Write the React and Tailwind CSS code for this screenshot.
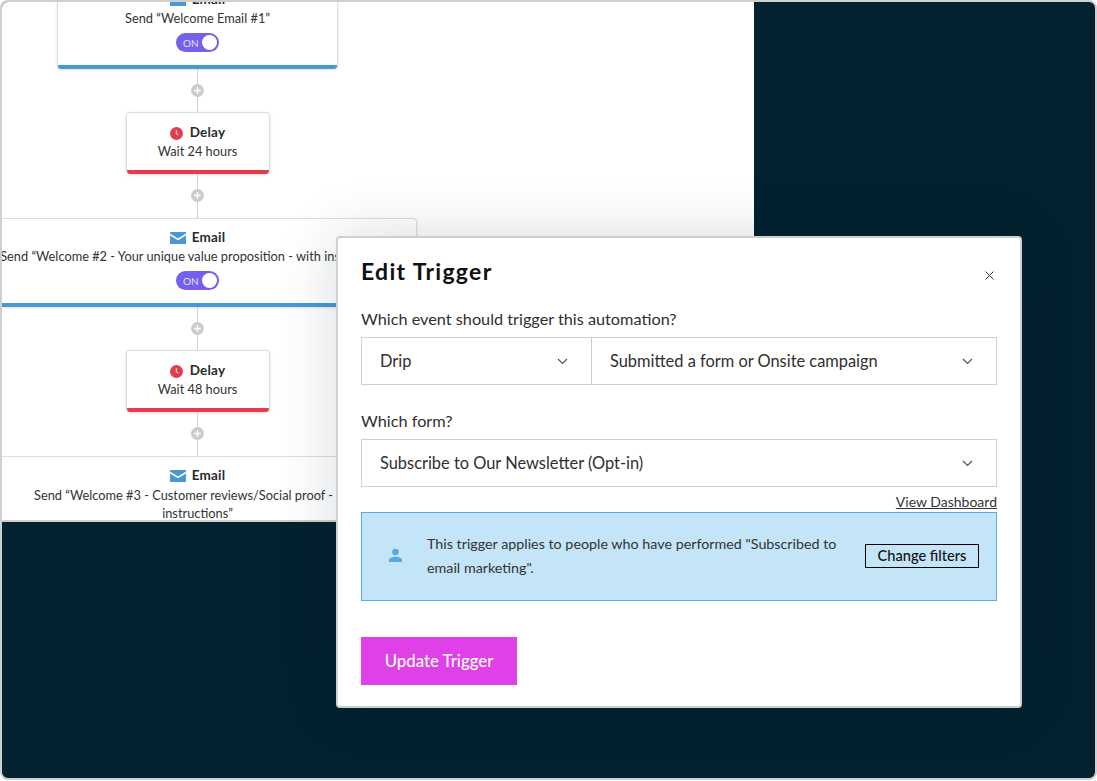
import React from "react";

const Plus = () => (
  <svg width="13" height="13" viewBox="0 0 13 13" className="block">
    <circle cx="6.5" cy="6.5" r="6.5" fill="#cccccc" />
    <path d="M6.5 3.2v6.6M3.2 6.5h6.6" stroke="#fff" strokeWidth="1.5" />
  </svg>
);

const Connector = ({ h1, h2 }) => (
  <div className="flex flex-col items-center">
    <div className="w-px bg-[#d2d2d2]" style={{ height: h1 }} />
    <Plus />
    <div className="w-px bg-[#d2d2d2]" style={{ height: h2 }} />
  </div>
);

const Mail = () => (
  <svg width="16" height="12" viewBox="0 0 16 12" className="block">
    <path d="M0 0h16v1.6L8 6.4 0 1.6z" fill="#4a98d2" />
    <path d="M0 3.4l8 4.8 8-4.8V12H0z" fill="#4a98d2" />
  </svg>
);

const Clock = () => (
  <svg width="13" height="13" viewBox="0 0 13 13" className="block">
    <circle cx="6.5" cy="6.5" r="6.5" fill="#e23c4e" />
    <path d="M6.3 3.4v3.3l2 1.3" stroke="#fff" strokeWidth="1" fill="none" />
  </svg>
);

const Toggle = () => (
  <div className="flex h-[19px] w-[43px] items-center justify-between rounded-full bg-[#7560ee] pl-[7px] pr-[2px]">
    <span className="text-[10px] leading-none text-[#e4e0fb]">ON</span>
    <span className="h-[15px] w-[15px] rounded-full bg-white" />
  </div>
);

const EmailHeader = () => (
  <div className="flex h-[16px] items-center gap-[6px]">
    <Mail />
    <span className="text-[13.5px] font-bold leading-none tracking-[0.2px] text-[#2b2b2b]">Email</span>
  </div>
);

const EmailCard = ({ widthClass, text, rounded = "rounded-b-[3px]" }) => (
  <div className={`${widthClass} ${rounded} flex shrink-0 flex-col items-center border border-b-0 border-[#dedede] bg-white pt-[11px] shadow-[0_1px_3px_rgba(0,0,0,0.12)]`}>
    <EmailHeader />
    <p className="mt-[1px] whitespace-nowrap text-center text-[12.8px] leading-[19px] text-[#333]">{text}</p>
    <div className="mt-[5px]">
      <Toggle />
    </div>
    <div className="mt-[13px] h-[4px] w-full rounded-b-[3px] bg-[#4a98d0]" />
  </div>
);

const DelayCard = ({ text }) => (
  <div className="flex h-[62px] w-[144px] shrink-0 flex-col items-center overflow-hidden rounded-[4px] border border-b-0 border-[#dedede] bg-white pt-[12px] shadow-[0_1px_3px_rgba(0,0,0,0.15)]">
    <div className="flex h-[16px] items-center gap-[7px]">
      <Clock />
      <span className="text-[13.5px] font-bold leading-none tracking-[0.2px] text-[#2b2b2b]">Delay</span>
    </div>
    <p className="mt-[1px] text-[12.8px] leading-[19px] text-[#333]">{text}</p>
    <div className="mt-auto h-[4px] w-full bg-[#e23c4e]" />
  </div>
);

const Chevron = () => (
  <svg width="11" height="7" viewBox="0 0 11 7" className="block shrink-0">
    <path d="M1 1l4.5 4.5L10 1" stroke="#555" strokeWidth="1.2" fill="none" />
  </svg>
);

const Select = ({ label, className = "" }) => (
  <div className={`flex h-full items-center justify-between pl-[18px] pr-[23px] ${className}`}>
    <span className="text-[16.4px] text-[#2f2f2f]">{label}</span>
    <Chevron />
  </div>
);

export default function App() {
  return (
    <div className="relative h-[781px] w-[1097px] overflow-hidden bg-white font-['Lato',sans-serif]">
      <div className="h-[780px] w-[1097px] overflow-hidden rounded-[8px] border-2 border-[#cfcfcf] bg-[#04212f]">
        <div className="h-[520px] w-[752px] overflow-hidden border-b-2 border-[#cfcfcf] bg-white">
          <div className="-mt-[22px] flex w-[391px] flex-col items-center">
            <EmailCard widthClass="w-[281px]" text="Send “Welcome Email #1”" />
            <Connector h1={15} h2={15} />
            <DelayCard text="Wait 24 hours" />
            <Connector h1={15} h2={16} />
            <EmailCard
              widthClass="w-[438px]"
              rounded="rounded-t-[4px]"
              text="Send “Welcome #2 - Your unique value proposition - with instructions”"
            />
            <Connector h1={15} h2={15} />
            <DelayCard text="Wait 48 hours" />
            <Connector h1={15} h2={16} />
            <div className="flex w-[438px] flex-col items-center border-t border-[#dedede] pt-[11px]">
              <EmailHeader />
              <p className="mt-[2px] w-[340px] text-center text-[12.8px] leading-[18px] text-[#333]">
                Send “Welcome #3 - Customer reviews/Social proof - with instructions”
              </p>
            </div>
          </div>
        </div>
      </div>

      <div className="absolute left-[336px] top-[236px] h-[472px] w-[686px] rounded-[4px] border-2 border-[#cfcfcf] bg-white px-[23px] pt-[18px] shadow-[0_0_60px_rgba(4,33,47,0.16)]">
        <div className="flex items-start justify-between">
          <h2 className="text-[23px] font-bold leading-[30px] tracking-[1.3px] text-[#111]">Edit Trigger</h2>
          <svg width="9" height="9" viewBox="0 0 9 9" className="mr-[3px] mt-[15px] block">
            <path d="M.5.5l8 8M8.5.5l-8 8" stroke="#333" strokeWidth="1" />
          </svg>
        </div>
        <p className="mt-[21px] text-[16.25px] leading-[24px] text-[#2f2f2f]">Which event should trigger this automation?</p>
        <div className="mt-[6px] flex h-[48px] border border-[#cfcfcf]">
          <Select label="Drip" className="w-[230px] border-r border-[#cfcfcf]" />
          <Select label="Submitted a form or Onsite campaign" className="flex-1" />
        </div>
        <p className="mt-[24px] text-[16.25px] leading-[24px] text-[#2f2f2f]">Which form?</p>
        <div className="mt-[6px] h-[48px] border border-[#cfcfcf]">
          <Select label="Subscribe to Our Newsletter (Opt-in)" />
        </div>
        <div className="flex h-[25px] items-end justify-end pb-[1px]">
          <a className="text-[14px] leading-[18px] text-[#333] underline">View Dashboard</a>
        </div>
        <div className="flex h-[89px] items-center border border-[#58ace8] bg-[#c4e4f8] pb-[2px] pl-[26px] pr-[17px]">
          <svg width="15" height="15" viewBox="0 0 15 15" className="block shrink-0">
            <circle cx="7.5" cy="4" r="3.3" fill="#58a8e2" />
            <path d="M1 14v-1.8C1 9.8 5 8.8 7.5 8.8s6.5 1 6.5 3.4V14z" fill="#58a8e2" />
          </svg>
          <p className="ml-[24px] w-[425px] text-[14.3px] leading-[24px] text-[#333]">
            This trigger applies to people who have performed "Subscribed to email marketing".
          </p>
          <button className="ml-auto flex h-[24px] w-[114px] items-center justify-center border border-black text-[14.6px] font-medium text-[#111]">
            Change filters
          </button>
        </div>
        <button className="mt-[36px] h-[48px] w-[156px] bg-[#e040e8] text-[16.8px] font-medium text-white">Update Trigger</button>
      </div>
    </div>
  );
}
